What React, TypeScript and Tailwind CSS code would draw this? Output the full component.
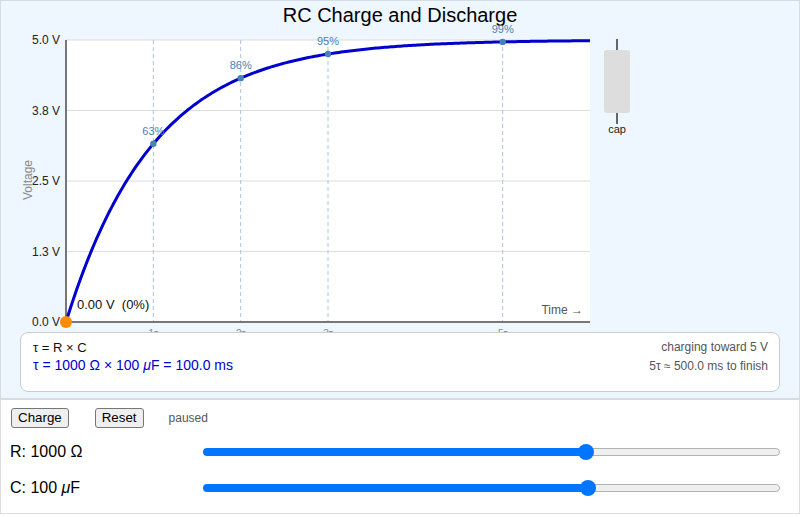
import React from "react";

const X0 = 66;
const X1 = 590;
const Y0 = 322;
const Y1 = 40;
const TAU_W = (X1 - X0) / 6;

function vx(t: number) {
  return X0 + t * TAU_W;
}
function vy(v: number) {
  return Y0 - (v / 5) * (Y0 - Y1);
}

function curvePath() {
  const pts: string[] = [];
  for (let i = 0; i <= 240; i++) {
    const t = (i / 240) * 6;
    const v = 5 * (1 - Math.exp(-t));
    pts.push(`${i === 0 ? "M" : "L"}${vx(t).toFixed(2)},${vy(v).toFixed(2)}`);
  }
  return pts.join(" ");
}

function Chart() {
  const grid = [
    { v: 5, label: "5.0 V" },
    { v: 3.75, label: "3.8 V" },
    { v: 2.5, label: "2.5 V" },
    { v: 1.25, label: "1.3 V" },
    { v: 0, label: "0.0 V" },
  ];
  const marks = [
    { k: 1, p: "63%" },
    { k: 2, p: "86%" },
    { k: 3, p: "95%" },
    { k: 5, p: "99%" },
  ];
  return (
    <svg width={640} height={309} viewBox="1 23 640 309" className="block">
      <rect x={X0} y={Y1} width={X1 - X0} height={Y0 - Y1} fill="#ffffff" />
      {grid.map((g) => (
        <line key={g.label} x1={X0} x2={X1} y1={vy(g.v)} y2={vy(g.v)} stroke="#dddddd" strokeWidth={1} />
      ))}
      {marks.map((m) => (
        <line
          key={m.k}
          x1={vx(m.k)}
          x2={vx(m.k)}
          y1={Y1}
          y2={Y0}
          stroke="#b0c4de"
          strokeWidth={1}
          strokeDasharray="4 3"
        />
      ))}
      {marks.map((m) => (
        <text key={"xl" + m.k} x={vx(m.k)} y={337} fontSize={10} fill="#888888" textAnchor="middle">
          {m.k}τ
        </text>
      ))}
      <line x1={X0} x2={X0} y1={Y1} y2={Y0 + 1} stroke="#777777" strokeWidth={2} />
      <line x1={X0} x2={X1} y1={Y0} y2={Y0} stroke="#777777" strokeWidth={2} />
      {grid.map((g) => (
        <text key={"yl" + g.label} x={60} y={vy(g.v) + 4} fontSize={12} fill="#222222" textAnchor="end">
          {g.label}
        </text>
      ))}
      <text transform="translate(32,180) rotate(-90)" fontSize={12} fill="#888888" textAnchor="middle">
        Voltage
      </text>
      <text x={583} y={314} fontSize={12} fill="#555555" textAnchor="end">
        Time →
      </text>
      <path d={curvePath()} fill="none" stroke="#0000cc" strokeWidth={3} strokeLinejoin="round" />
      {marks.map((m) => {
        const v = 5 * (1 - Math.exp(-m.k));
        return (
          <g key={"d" + m.k}>
            <circle cx={vx(m.k)} cy={vy(v)} r={3.2} fill="#4682b4" />
            <text x={vx(m.k)} y={vy(v) - 9} fontSize={11} fill="#4682b4" textAnchor="middle">
              {m.p}
            </text>
          </g>
        );
      })}
      <circle cx={X0} cy={Y0} r={6} fill="#ff8c00" />
      <text x={77} y={309} fontSize={13} fill="#111111" style={{ whiteSpace: "pre" }}>
        {"0.00 V  (0%)"}
      </text>
      {/* capacitor */}
      <line x1={617} x2={617} y1={39} y2={51} stroke="#666666" strokeWidth={2} />
      <line x1={617} x2={617} y1={112} y2={124} stroke="#666666" strokeWidth={2} />
      <rect x={604} y={50} width={26} height={63} rx={3} fill="#dddddd" />
      <text x={617} y={133} fontSize={11} fill="#222222" textAnchor="middle">
        cap
      </text>
    </svg>
  );
}

function Slider({ thumb }: { thumb: number }) {
  const fill = thumb - 203;
  return (
    <div className="relative flex h-[16px] w-[577px] items-center">
      <div className="h-[8px] rounded-l-full bg-[#0075ff]" style={{ width: fill }} />
      <div className="h-[8px] flex-1 rounded-r-full border border-[#b2b2b2] bg-[#efefef]" />
      <div
        className="absolute top-0 h-[16px] w-[16px] rounded-full bg-[#0075ff]"
        style={{ left: fill - 8 }}
      />
    </div>
  );
}

export default function App() {
  return (
    <div className="h-[517px] w-[800px] overflow-hidden bg-white font-['Liberation_Sans',Arial,sans-serif] text-black">
      <div className="flex h-[399px] flex-col border border-[#d6dce3] bg-[#eef6ff]">
        <div className="mt-[3px] h-[19px] text-center text-[20px] leading-[22px]">RC Charge and Discharge</div>
        <Chart />
        <div className="ml-[19px] flex h-[60px] w-[760px] justify-between rounded-[8px] border border-[#cccccc] bg-white pl-[12px] pr-[11px] pt-[6px]">
          <div>
            <div className="text-[13px] leading-[17px] text-[#111]">τ = R × C</div>
            <div className="text-[14px] leading-[18px] text-[#0000cc]">
              τ = 1000 Ω × 100 <span className="italic">μ</span>F = 100.0 ms
            </div>
          </div>
          <div className="text-right text-[12px] text-[#555555]">
            <div className="leading-[17px]">charging toward 5 V</div>
            <div className="mt-[2px] leading-[17px]">5τ ≈ 500.0 ms to finish</div>
          </div>
        </div>
      </div>
      <div className="h-[115px] border border-[#dcdcdc] bg-white">
        <div className="flex items-center pl-[10px] pt-[8px]">
          <button className="h-[20px] rounded-[3px] border border-[#767676] bg-[#efefef] px-[6px] text-[13.33px] leading-[16px]">
            Charge
          </button>
          <button className="ml-[26px] h-[20px] rounded-[3px] border border-[#767676] bg-[#efefef] px-[6px] text-[13.33px] leading-[16px]">
            Reset
          </button>
          <span className="ml-[25px] text-[12px] text-[#555555]">paused</span>
        </div>
        <div className="mt-[6px] flex h-[36px] items-center pl-[9px]">
          <div className="w-[193px] text-[16px]">R: 1000 Ω</div>
          <Slider thumb={586} />
        </div>
        <div className="flex h-[36px] items-center pl-[9px]">
          <div className="w-[193px] text-[16px]">
            C: 100 <span className="italic">μ</span>F
          </div>
          <Slider thumb={588} />
        </div>
      </div>
    </div>
  );
}
